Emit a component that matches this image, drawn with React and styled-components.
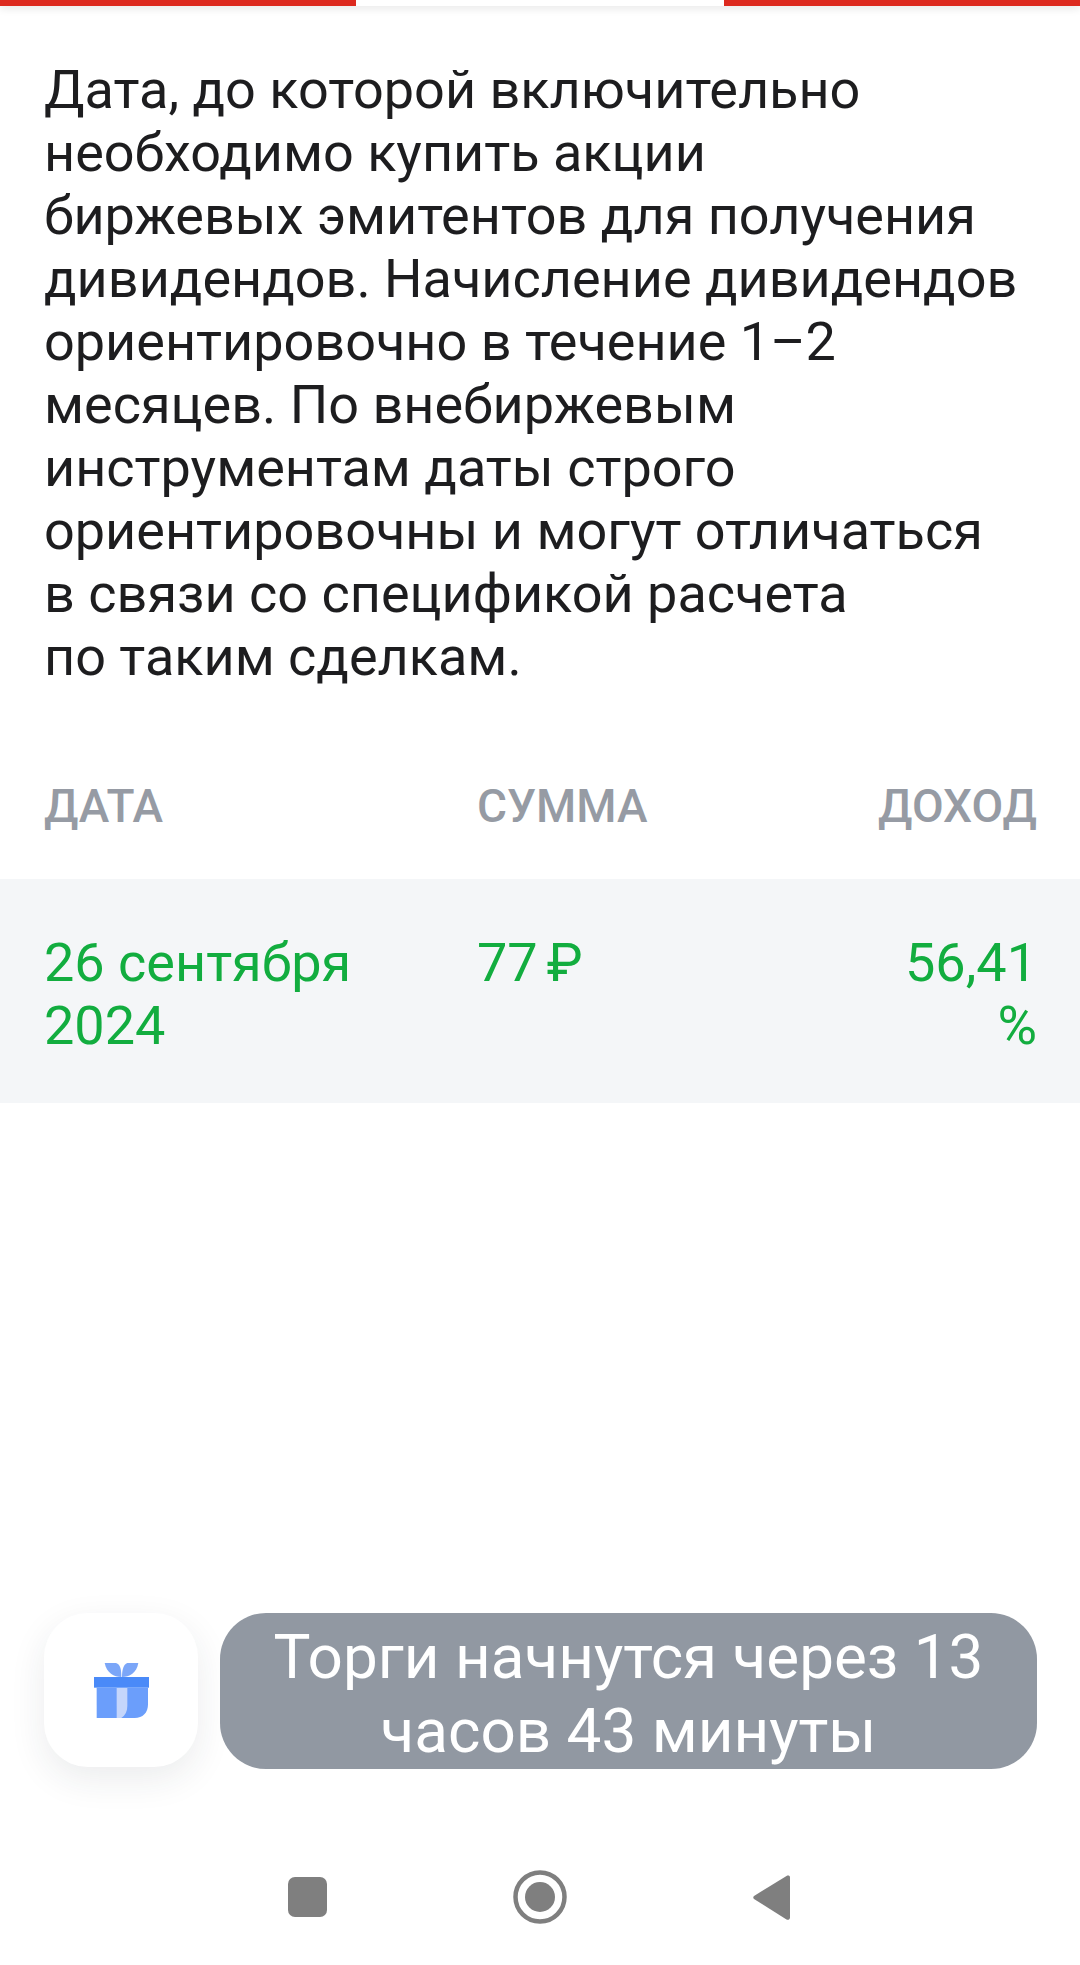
import styled, { createGlobalStyle } from "styled-components";

const GlobalStyle = createGlobalStyle`
  html, body {
    margin: 0;
    padding: 0;
    background: #fff;
  }
  * {
    box-sizing: border-box;
  }
`

const Page = styled.div`
  width: 1080px;
  height: 1965px;
  display: flex;
  flex-direction: column;
  overflow: hidden;
  background: #fff;
  font-family: Roboto, "Liberation Sans", sans-serif;
`

const Tabs = styled.div`
  display: grid;
  grid-template-columns: 356px 368px 356px;
  height: 6px;
  box-shadow: 0 2px 8px rgba(0, 0, 0, .12);
`

const Tab = styled.div`
  background: ${({ $active }) => ($active ? "#fff" : "#dd2a1f")};
`

const Description = styled.p`
  margin: 52px 0 0;
  padding: 0 44px;
  font-size: 54px;
  line-height: 63px;
  color: #1d1d1f;
  white-space: nowrap;
`

const Row = styled.div`
  display: grid;
  grid-template-columns: 433px 1fr auto;
  padding: 0 43px 0 44px;
`

const HeadRow = styled(Row)`
  margin-top: 86px;
  height: 105px;
  padding-top: 1px;
  font-size: 46px;
  line-height: 63px;
  font-weight: 500;
  color: #969ba4;
`

const ValueRow = styled(Row)`
  height: 224px;
  padding-top: 52px;
  background: #f4f6f8;
  font-size: 54px;
  line-height: 63px;
  color: #12ad3f;
`

const RightCell = styled.div`
  text-align: right;
`

const Amount = styled.div`
  display: flex;
  align-items: baseline;
  gap: 9px;
`

const Spacer = styled.div`
  flex: 1;
`

const ActionRow = styled.div`
  display: flex;
  gap: 22px;
  padding: 0 43px 0 44px;
`

const GiftButton = styled.div`
  flex: none;
  width: 154px;
  height: 154px;
  display: flex;
  align-items: center;
  justify-content: center;
  border-radius: 44px;
  background: #fff;
  box-shadow: 0 12px 36px rgba(30, 40, 60, .09);
`

const TradeButton = styled.div`
  flex: 1;
  height: 156px;
  display: flex;
  align-items: center;
  justify-content: center;
  padding-top: 5px;
  border-radius: 46px;
  background: #9198a2;
  color: #fff;
  font-size: 62px;
  line-height: 74px;
  text-align: center;
  white-space: nowrap;
`

const NavBar = styled.div`
  display: flex;
  align-items: center;
  justify-content: center;
  gap: 186px;
  height: 196px;
  padding: 60px 2px 0 0;
`

function GiftIcon() {
  return (
    <svg width="55" height="55" viewBox="0 0 165 165">
      <path d="M32 0h34c14 4 16 22 16 42C60 42 38 30 32 0z" fill="#7ba6f8" />
      <path d="M133 0H100C88 4 84 22 84 42c22 0 44-12 49-42z" fill="#7ba6f8" />
      <path d="M8 74h154v50c0 26-16 41-40 41H8z" fill="#6b9efb" />
      <path d="M68 74h32v55c0 16-6 28-18 36H68z" fill="#c5d6fb" />
      <rect y="42" width="165" height="32" fill="#4a8af8" />
    </svg>
  );
}

function SquareIcon() {
  return (
    <svg width="39" height="40" viewBox="0 0 39 40">
      <rect width="39" height="40" rx="7" fill="#7f7f7f" />
    </svg>
  );
}

function CircleIcon() {
  return (
    <svg width="54" height="54" viewBox="0 0 54 54">
      <circle cx="27" cy="27" r="24.5" fill="none" stroke="#7f7f7f" strokeWidth="4.5" />
      <circle cx="27" cy="27" r="15" fill="#7f7f7f" />
    </svg>
  );
}

function BackIcon() {
  return (
    <svg width="37" height="45" viewBox="0 0 37 45">
      <path d="M33.5 1 1 21c-1 .8-1 2.2 0 3l32.5 20.500c1.500.8 3.500 0 3.500-2V2.500c0-2-2-2.300-3.500-1.500z" fill="#7f7f7f" />
    </svg>
  );
}

const lines = [
  "Дата, до которой включительно",
  "необходимо купить акции",
  "биржевых эмитентов для получения",
  "дивидендов. Начисление дивидендов",
  "ориентировочно в течение 1–2",
  "месяцев. По внебиржевым",
  "инструментам даты строго",
  "ориентировочны и могут отличаться",
  "в связи со спецификой расчета",
  "по таким сделкам.",
];

function App() {
  return (
    <Page>
      <GlobalStyle />
      <Tabs>
        <Tab />
        <Tab $active />
        <Tab />
      </Tabs>

      <Description>
        {lines.map((line) => (
          <span key={line}>
            {line}
            <br />
          </span>
        ))}
      </Description>

      <HeadRow>
        <div>ДАТА</div>
        <div>СУММА</div>
        <RightCell>ДОХОД</RightCell>
      </HeadRow>

      <ValueRow>
        <div>
          26 сентября
          <br />
          2024
        </div>
        <Amount>
          <span>77</span>
          <span>₽</span>
        </Amount>
        <RightCell>
          56,41
          <br />%
        </RightCell>
      </ValueRow>

      <Spacer />

      <ActionRow>
        <GiftButton>
          <GiftIcon />
        </GiftButton>
        <TradeButton>
          Торги начнутся через 13
          <br />
          часов 43 минуты
        </TradeButton>
      </ActionRow>

      <NavBar>
        <SquareIcon />
        <CircleIcon />
        <BackIcon />
      </NavBar>
    </Page>
  );
}

export default App;
